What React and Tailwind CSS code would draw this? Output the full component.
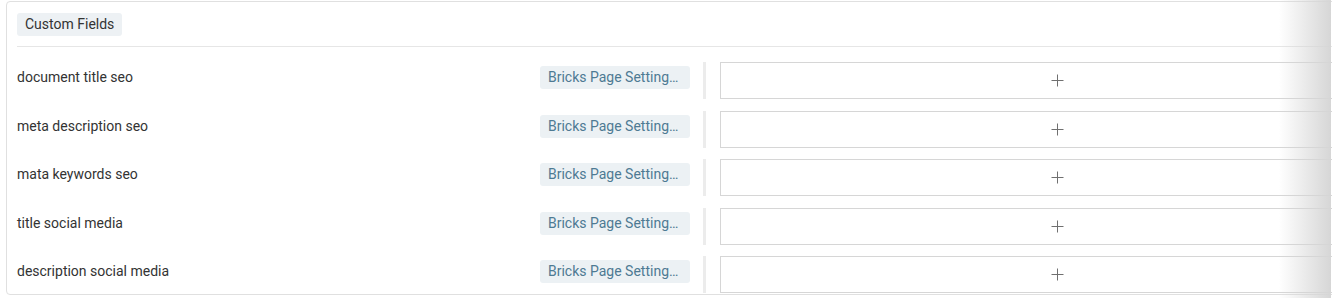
const fields = [
  "document title seo",
  "meta description seo",
  "mata keywords seo",
  "title social media",
  "description social media",
];

function PlusIcon() {
  return (
    <svg width="13" height="13" viewBox="0 0 13 13" className="text-[#707070]">
      <path d="M6.5 0.5v12M0.5 6.5h12" stroke="currentColor" strokeWidth="1" fill="none" />
    </svg>
  );
}

function FieldRow({ label }) {
  return (
    <div className="flex items-start h-[37px]">
      <div className="w-[523px] shrink-0 pt-[4px] h-[23px] leading-[23px] text-[14px] text-[#333]">
        {label}
      </div>
      <div className="w-[150px] shrink-0 mt-[4px] h-[23px] leading-[23px] px-2 rounded-[3px] bg-[#ecf1f4] text-[14px] text-[#4e7a93] whitespace-nowrap overflow-hidden">
        Bricks Page Setting…
      </div>
      <div className="ml-[13px] w-[3px] h-[37px] bg-[#ececec] shrink-0" />
      <div className="ml-[14px] w-[674px] h-[37px] shrink-0 border border-[#d6d6d6] flex items-center justify-center">
        <PlusIcon />
      </div>
    </div>
  );
}

export default function App() {
  return (
    <div className="relative w-[1332px] h-[298px] overflow-hidden bg-white font-['Roboto',sans-serif]">
      <div className="ml-[6px] mt-[1px] w-[1420px] h-[294px] border border-[#e0e0e0] rounded-[4px] pl-[10px] pt-[10px]">
        <div className="pb-[10px] border-b border-[#e6e6e6]">
          <span className="inline-block h-[23px] leading-[23px] px-2 rounded-[3px] bg-[#edf1f4] text-[14px] text-[#333]">
            Custom Fields
          </span>
        </div>
        <div className="pt-[15px] flex flex-col gap-[11.5px]">
          {fields.map((f) => (
            <FieldRow key={f} label={f} />
          ))}
        </div>
      </div>
      <div className="absolute top-0 right-[1px] w-[52px] h-full bg-gradient-to-r from-white/0 to-[#d6d6d6]" />
    </div>
  );
}
